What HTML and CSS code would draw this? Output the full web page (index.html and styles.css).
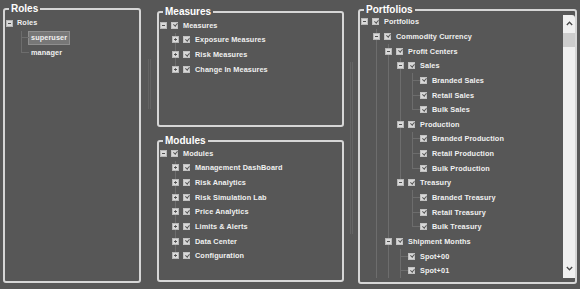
FILE: index.html
```html
<!DOCTYPE html>
<html lang="en">
<head>
  <meta charset="UTF-8">
  <title>Access Rights</title>
  <link rel="stylesheet" href="styles.css">
</head>
<body>
  <div class="page">

    <!-- Roles -->
    <fieldset class="panel panel-roles">
      <legend>Roles</legend>
      <ul class="tree tree-plain">
        <li>
          <div class="row"><span class="tog minus"></span><span class="txt">Roles</span></div>
          <ul>
            <li><div class="row"><span class="tog none"></span><span class="txt selected">superuser</span></div></li>
            <li><div class="row"><span class="tog none"></span><span class="txt">manager</span></div></li>
          </ul>
        </li>
      </ul>
    </fieldset>

    <div class="splitter"><div class="grip grip-short"></div></div>

    <div class="stack">
      <!-- Measures -->
      <fieldset class="panel panel-measures">
        <legend>Measures</legend>
        <ul class="tree">
          <li>
            <div class="row"><span class="tog minus"></span><span class="cb"></span><span class="txt">Measures</span></div>
            <ul>
              <li><div class="row"><span class="tog plus"></span><span class="cb"></span><span class="txt">Exposure Measures</span></div></li>
              <li><div class="row"><span class="tog plus"></span><span class="cb"></span><span class="txt">Risk Measures</span></div></li>
              <li><div class="row"><span class="tog plus"></span><span class="cb"></span><span class="txt">Change In Measures</span></div></li>
            </ul>
          </li>
        </ul>
      </fieldset>

      <!-- Modules -->
      <fieldset class="panel panel-modules">
        <legend>Modules</legend>
        <ul class="tree">
          <li>
            <div class="row"><span class="tog minus"></span><span class="cb"></span><span class="txt">Modules</span></div>
            <ul>
              <li><div class="row"><span class="tog plus"></span><span class="cb"></span><span class="txt">Management DashBoard</span></div></li>
              <li><div class="row"><span class="tog plus"></span><span class="cb"></span><span class="txt">Risk Analytics</span></div></li>
              <li><div class="row"><span class="tog plus"></span><span class="cb"></span><span class="txt">Risk Simulation Lab</span></div></li>
              <li><div class="row"><span class="tog plus"></span><span class="cb"></span><span class="txt">Price Analytics</span></div></li>
              <li><div class="row"><span class="tog plus"></span><span class="cb"></span><span class="txt">Limits &amp; Alerts</span></div></li>
              <li><div class="row"><span class="tog plus"></span><span class="cb"></span><span class="txt">Data Center</span></div></li>
              <li><div class="row"><span class="tog plus"></span><span class="cb"></span><span class="txt">Configuration</span></div></li>
            </ul>
          </li>
        </ul>
      </fieldset>
    </div>

    <div class="splitter"><div class="grip grip-long"></div></div>

    <!-- Portfolios -->
    <fieldset class="panel panel-portfolios">
      <legend>Portfolios</legend>
      <div class="scroll-area">
        <div class="scroll-content">
          <ul class="tree">
            <li>
              <div class="row"><span class="tog minus"></span><span class="cb"></span><span class="txt">Portfolios</span></div>
              <ul>
                <li class="more">
                  <div class="row"><span class="tog minus"></span><span class="cb"></span><span class="txt">Commodity Currency</span></div>
                  <ul>
                    <li>
                      <div class="row"><span class="tog minus"></span><span class="cb"></span><span class="txt">Profit Centers</span></div>
                      <ul>
                        <li>
                          <div class="row"><span class="tog minus"></span><span class="cb"></span><span class="txt">Sales</span></div>
                          <ul>
                            <li><div class="row"><span class="tog none"></span><span class="cb"></span><span class="txt">Branded Sales</span></div></li>
                            <li><div class="row"><span class="tog none"></span><span class="cb"></span><span class="txt">Retail Sales</span></div></li>
                            <li><div class="row"><span class="tog none"></span><span class="cb"></span><span class="txt">Bulk Sales</span></div></li>
                          </ul>
                        </li>
                        <li>
                          <div class="row"><span class="tog minus"></span><span class="cb"></span><span class="txt">Production</span></div>
                          <ul>
                            <li><div class="row"><span class="tog none"></span><span class="cb"></span><span class="txt">Branded Production</span></div></li>
                            <li><div class="row"><span class="tog none"></span><span class="cb"></span><span class="txt">Retail Production</span></div></li>
                            <li><div class="row"><span class="tog none"></span><span class="cb"></span><span class="txt">Bulk Production</span></div></li>
                          </ul>
                        </li>
                        <li>
                          <div class="row"><span class="tog minus"></span><span class="cb"></span><span class="txt">Treasury</span></div>
                          <ul>
                            <li><div class="row"><span class="tog none"></span><span class="cb"></span><span class="txt">Branded Treasury</span></div></li>
                            <li><div class="row"><span class="tog none"></span><span class="cb"></span><span class="txt">Retail Treasury</span></div></li>
                            <li><div class="row"><span class="tog none"></span><span class="cb"></span><span class="txt">Bulk Treasury</span></div></li>
                          </ul>
                        </li>
                      </ul>
                    </li>
                    <li class="more">
                      <div class="row"><span class="tog minus"></span><span class="cb"></span><span class="txt">Shipment Months</span></div>
                      <ul>
                        <li><div class="row"><span class="tog none"></span><span class="cb"></span><span class="txt">Spot+00</span></div></li>
                        <li class="more"><div class="row"><span class="tog none"></span><span class="cb"></span><span class="txt">Spot+01</span></div></li>
                      </ul>
                    </li>
                  </ul>
                </li>
              </ul>
            </li>
          </ul>
        </div>

        <div class="scrollbar">
          <div class="sb-btn">
            <svg width="7" height="5" viewBox="0 0 7 5"><polyline points="0.8,4 3.5,1.2 6.2,4" fill="none" stroke="#4a4a4a" stroke-width="1.3"/></svg>
          </div>
          <div class="sb-thumb"></div>
          <div class="sb-track"></div>
          <div class="sb-btn">
            <svg width="7" height="5" viewBox="0 0 7 5"><polyline points="0.8,1 3.5,3.8 6.2,1" fill="none" stroke="#4a4a4a" stroke-width="1.3"/></svg>
          </div>
        </div>
      </div>
    </fieldset>

  </div>
</body>
</html>
```

FILE: styles.css
```css
/* Base */
:root {
  --fundo: #575757;
  --borda: #d6d6d6;
  --linha: #6d6d6d;
  --texto: #f0f0f0;
}

* {
  box-sizing: border-box;
}

body {
  margin: 0;
  background: var(--fundo);
  font-family: "Liberation Sans", Arial, sans-serif;
  color: var(--texto);
}

/* Layout */
.page {
  display: grid;
  grid-template-columns: 138px 16px 187px 14px 219px;
  align-items: start;
  height: 289px;
  padding: 4px 3px 0;
}

.stack {
  display: flex;
  flex-direction: column;
  gap: 9px;
  margin-top: 3px;
}

.splitter {
  display: flex;
  justify-content: center;
}

.grip {
  width: 3px;
  border-left: 1px solid #646464;
  border-right: 1px solid #646464;
}

.grip-short {
  margin-top: 55px;
  height: 50px;
}

.grip-long {
  margin-top: 58px;
  height: 172px;
}

/* Panels */
.panel {
  margin: 0;
  min-width: 0;
  padding: 0 1px;
  border: 2px solid var(--borda);
  border-radius: 3px;
  overflow: hidden;
}

.panel legend {
  margin-left: 3px;
  padding: 0 2px;
  font-size: 10px;
  line-height: 10px;
  font-weight: bold;
  color: #fff;
}

.panel-roles {
  height: 279px;
}

.panel-measures {
  height: 120px;
}

.panel-measures .tree {
  padding-top: 1px;
}

.panel-modules {
  height: 146px;
}

.panel-portfolios {
  height: 279px;
  margin-top: 1px;
  padding: 0 0 0 1px;
}

/* Tree */
.tree,
.tree ul {
  list-style: none;
  margin: 0;
  padding: 0;
}

.tree ul {
  padding-left: 12px;
}

.tree ul > li {
  position: relative;
}

.tree ul > li::before {
  content: '';
  position: absolute;
  left: 3px;
  top: 0;
  bottom: 0;
  border-left: 1px solid var(--linha);
}

.tree ul > li:last-child::before {
  bottom: auto;
  height: 7px;
}

/* branch continues below the visible part */
.tree ul > li.more:last-child::before {
  bottom: 0;
  height: auto;
}

.row {
  display: flex;
  align-items: center;
  height: 14.65px;
  white-space: nowrap;
}

.tog {
  position: relative;
  z-index: 1;
  flex: none;
  width: 7px;
  height: 7px;
  margin-right: 4px;
  background: #dadada;
  border: 1px solid #b8b8b8;
}

.tog.minus::after,
.tog.plus::after {
  content: '';
  position: absolute;
  left: 1px;
  top: 2px;
  width: 3px;
  height: 1px;
  background: #505050;
}

.tog.plus::before {
  content: '';
  position: absolute;
  left: 2px;
  top: 1px;
  width: 1px;
  height: 3px;
  background: #707070;
}

.tog.none {
  background: none;
  border: none;
}

.tog.none::after {
  content: '';
  position: absolute;
  left: 3px;
  right: -4px;
  top: 3px;
  border-top: 1px solid var(--linha);
}

.cb {
  position: relative;
  flex: none;
  width: 7px;
  height: 7px;
  margin-right: 5px;
  background: #d8d8d8;
  border: 1px solid #c2c2c2;
}

.cb::after {
  content: '';
  position: absolute;
  left: 1.5px;
  top: -0.5px;
  width: 1.5px;
  height: 3px;
  border-right: 1px solid #555;
  border-bottom: 1px solid #555;
  transform: rotate(40deg);
}

.txt {
  font-size: 7.3px;
  font-weight: bold;
  letter-spacing: 0.1px;
}

/* Roles tree (no checkboxes) */
.tree-plain {
  padding-top: 2px;
}

.tree-plain .txt {
  padding: 0 2px;
  line-height: 12px;
  border: 1px solid transparent;
}

.tree-plain .txt.selected {
  background: #777;
  border-color: #8e8e8e;
}

.tree-plain .tog.minus {
  margin-right: 1px;
}

.tree-plain .tog.none {
  margin-right: 3px;
}

/* Portfolios scroll area */
.scroll-area {
  display: flex;
  height: 265px;
  margin-top: -2px;
}

.scroll-content {
  flex: 1;
  overflow: hidden;
  padding-top: 1.5px;
}

.scrollbar {
  display: flex;
  flex-direction: column;
  width: 12px;
  background: #f0f0f0;
}

.sb-btn {
  display: flex;
  align-items: center;
  justify-content: center;
  height: 20px;
}

.sb-thumb {
  height: 14px;
  background: #cdcdcd;
}

.sb-track {
  flex: 1;
}
```
